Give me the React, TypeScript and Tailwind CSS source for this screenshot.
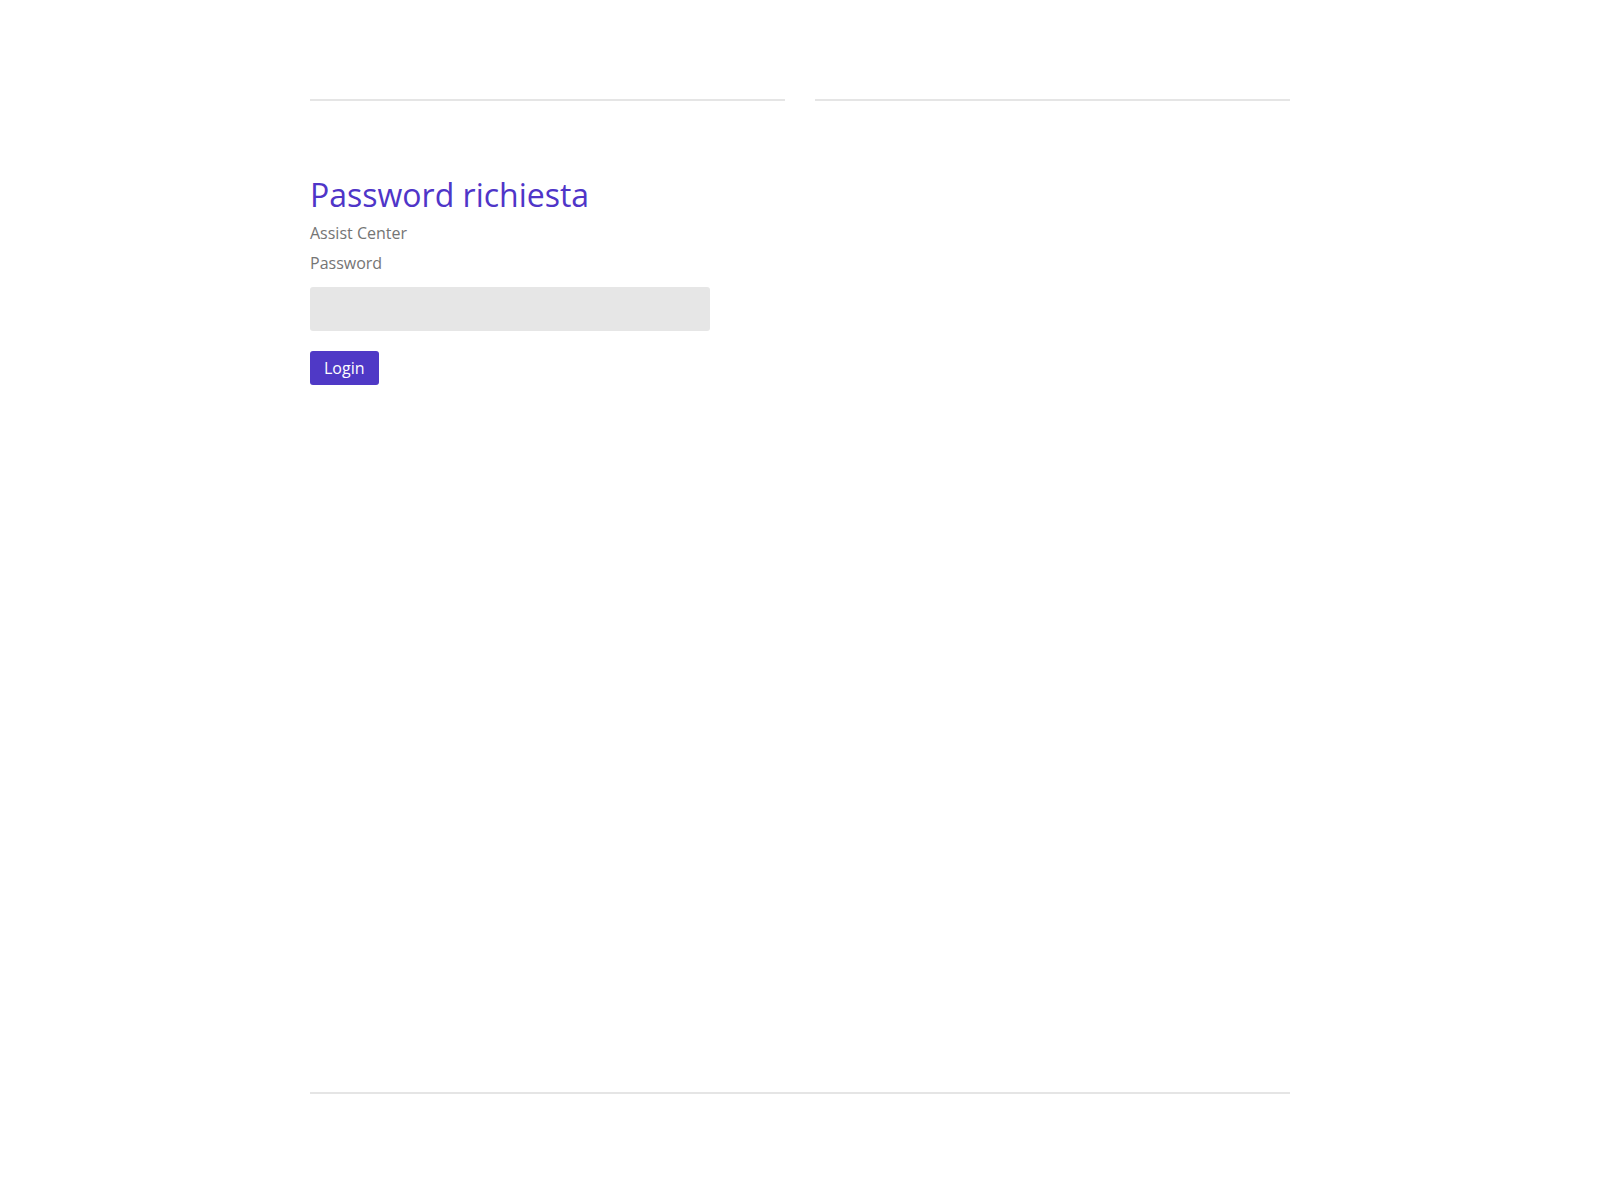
import { useState } from 'react';

// Pagina di accesso protetta da password

export default function App() {
  const [password, setPassword] = useState('');

  return (
    <div className="flex min-h-screen flex-col bg-white font-['Open_Sans',sans-serif] text-[#757575]">
      <div className="mx-auto flex w-[980px] flex-1 flex-col">
        {/* 1. intestazione a due colonne */}
        <header className="grid grid-cols-2 gap-[30px] pt-[99px]">
          <div className="border-t-2 border-[#e5e5e5]" />
          <div className="border-t-2 border-[#e5e5e5]" />
        </header>

        {/* 2. modulo password */}
        <main className="flex-1 pt-[74px]">
          <h1 className="text-[32px] leading-[40px] font-normal text-[#4f35c8]">
            Password richiesta
          </h1>
          <p className="mt-[6px] text-base leading-6">Assist Center</p>
          <form
            className="mt-[6px] flex flex-col items-start"
            onSubmit={(e) => e.preventDefault()}
          >
            <label htmlFor="password" className="text-base leading-6">
              Password
            </label>
            <input
              id="password"
              type="password"
              value={password}
              onChange={(e) => setPassword(e.target.value)}
              className="mt-3 h-[44px] w-[400px] rounded-[3px] bg-[#e6e6e6] px-3 text-base text-gray-800 outline-none"
            />
            <button
              type="submit"
              className="mt-5 rounded-[3px] bg-[#4f39c6] px-[14px] py-[5px] text-base leading-6 text-white"
            >
              Login
            </button>
          </form>
        </main>

        {/* 3. piè di pagina */}
        <footer className="h-[108px] border-t-2 border-[#e5e5e5]" />
      </div>
    </div>
  );
}
